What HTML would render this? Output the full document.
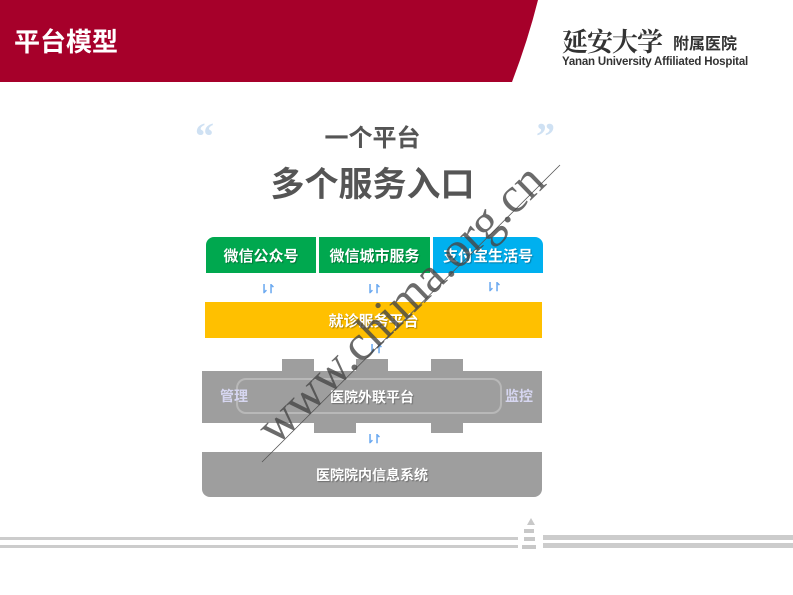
<!DOCTYPE html>
<html><head><meta charset="utf-8"><style>
*{margin:0;padding:0;box-sizing:border-box}
body{width:793px;height:595px;background:#fff;position:relative;overflow:hidden;font-family:"Liberation Sans","Noto Sans CJK SC",sans-serif}
.a{position:absolute}
.box{position:absolute;color:#fff;font-weight:bold;font-size:15px;display:flex;align-items:center;justify-content:center;text-shadow:1px 1px 1px rgba(0,0,0,.3)}
.arr{position:absolute;color:#6aa8f0;font-size:12px;font-weight:bold;letter-spacing:-3px}
.g{background:#9e9e9e}
</style></head><body>
<svg class="a" style="left:0;top:0" width="545" height="84"><path d="M0 0H538Q528 40 512 82H0Z" fill="#a6002a"/></svg>
<div class="a" style="left:14px;top:22px;color:#fff;font-size:26px;font-weight:bold">平台模型</div>
<div class="a" style="left:562px;top:22px;font-size:26px;font-family:'Noto Serif CJK SC',serif;font-weight:bold;color:#333;letter-spacing:-1px">延安大学</div>
<div class="a" style="left:673px;top:30px;font-size:16px;font-weight:bold;color:#333">附属医院</div>
<div class="a" style="left:562px;top:56px;font-size:11.5px;font-weight:bold;color:#333;letter-spacing:-.2px">Yanan University Affiliated Hospital</div>

<div class="a" style="left:195px;top:115px;font-size:38px;color:#cfe1f3;font-family:'Liberation Serif',serif;font-weight:bold">“</div>
<div class="a" style="left:536px;top:115px;font-size:38px;color:#cfe1f3;font-family:'Liberation Serif',serif;font-weight:bold">”</div>
<div class="a" style="left:0;width:745px;top:118px;text-align:center;font-size:24px;font-weight:bold;color:#555">一个平台</div>
<div class="a" style="left:0;width:745px;top:157px;text-align:center;font-size:34px;font-weight:bold;color:#555">多个服务入口</div>

<div class="box" style="left:206px;top:237px;width:110px;height:36px;background:#00a84f;border-radius:8px 0 0 0">微信公众号</div>
<div class="box" style="left:319px;top:237px;width:111px;height:36px;background:#00a84f">微信城市服务</div>
<div class="box" style="left:433px;top:237px;width:110px;height:36px;background:#00b0ef;border-radius:0 8px 0 0">支付宝生活号</div>
<div class="arr" style="left:259px;top:282px">⇂↾</div>
<div class="arr" style="left:365px;top:282px">⇂↾</div>
<div class="arr" style="left:485px;top:280px">⇂↾</div>
<div class="box" style="left:205px;top:302px;width:337px;height:36px;background:#ffc000">就诊服务平台</div>
<div class="arr" style="left:367px;top:342px">⇂↾</div>
<div class="a g" style="left:282px;top:359px;width:32px;height:14px"></div>
<div class="a g" style="left:356px;top:359px;width:32px;height:14px"></div>
<div class="a g" style="left:431px;top:359px;width:32px;height:14px"></div>
<div class="box g" style="left:202px;top:371px;width:340px;height:52px;font-size:14px">医院外联平台</div>
<div class="a" style="left:236px;top:378px;width:266px;height:36px;border:2px solid #b8b8b8;border-radius:10px"></div>
<div class="a" style="left:220px;top:386px;color:#d6d6f0;font-weight:bold;font-size:14px">管理</div>
<div class="a" style="left:505px;top:386px;color:#d6d6f0;font-weight:bold;font-size:14px">监控</div>
<div class="a g" style="left:314px;top:421px;width:42px;height:12px"></div>
<div class="a g" style="left:431px;top:421px;width:32px;height:12px"></div>
<div class="arr" style="left:365px;top:432px">⇂↾</div>
<div class="box g" style="left:202px;top:452px;width:340px;height:45px;border-radius:0 0 8px 8px;font-size:14px">医院院内信息系统</div>

<svg class="a" style="left:0;top:0" width="793" height="595"><line x1="262" y1="462" x2="560" y2="165" stroke="#555" stroke-width="0.8"/></svg>
<div class="a" style="left:180px;top:275px;width:440px;height:56px;transform:rotate(-44deg);color:rgba(70,70,70,.8);font-family:'Liberation Serif',serif;font-size:50px;white-space:nowrap;text-align:center;line-height:56px">www.chima.org.cn</div>

<div class="a" style="left:0;top:537px;width:518px;height:3px;background:#ccc"></div>
<div class="a" style="left:0;top:545px;width:518px;height:3px;background:#ccc"></div>
<div class="a" style="left:543px;top:535px;width:250px;height:5px;background:#ccc"></div>
<div class="a" style="left:543px;top:543px;width:250px;height:5px;background:#ccc"></div>
<svg class="a" style="left:518px;top:517px" width="26" height="34"><path d="M13 1L9 8H17Z M6 12H16V16H6Z M6 20H17V24H6Z M4 28H18V32H4Z" fill="#c8c8c8"/></svg>
</body></html>
